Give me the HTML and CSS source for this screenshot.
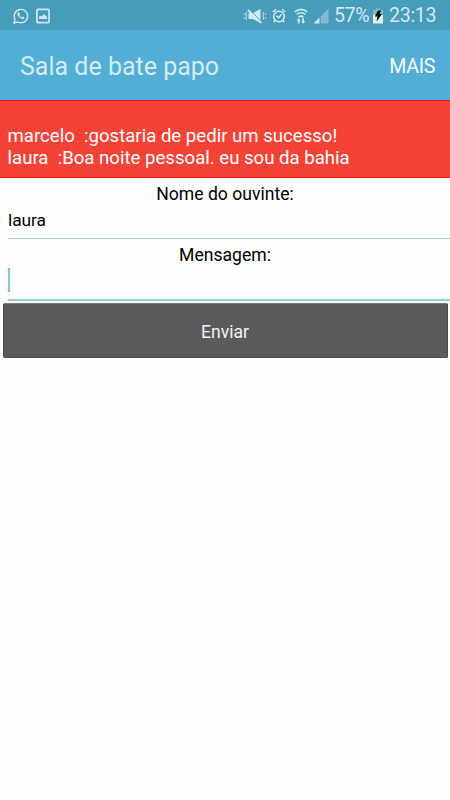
FILE: index.html
```html
<!DOCTYPE html>
<html lang="pt-BR">
<head>
    <meta charset="UTF-8">
    <meta name="viewport" content="width=device-width, initial-scale=1">
    <title>Sala de bate papo</title>
    <link rel="stylesheet" href="styles.css">
</head>
<body>
<div class="status-bar">
    <svg class="icon-whatsapp" width="16" height="16" viewBox="0 0 16 16">
        <path d="M1 15l1-3.8A6.7 6.7 0 1 1 4.8 14z" fill="none" stroke="#d3e9f1" stroke-width="1.4"/>
        <path d="M5.300 4.200c-1.600.7-1 3 .9 4.900s4.200 2.700 5.200 1.200c.4-.8 0-1.100-1.900-1.800l-1 1c-1-.4-1.800-1.200-2.200-2.200l.7-.9c-.4-1.800-.8-2.400-1.700-2.200z" fill="#d3e9f1"/>
    </svg>
    <svg class="icon-picture" width="14" height="16" viewBox="0 0 14 16">
        <rect x=".9" y="1.400" width="12.200" height="13.200" rx=".8" fill="none" stroke="#d3e9f1" stroke-width="1.700"/>
        <path d="M3 11V8.700l1.700-1.200 1.300.8 2.200-2.200 1.300 1.600 1.500.9V11z" fill="#d3e9f1"/>
    </svg>
    <span class="spacer"></span>
    <svg class="icon-mute" width="24" height="16" viewBox="0 0 24 16">
        <path d="M5.500 5.200h4.300L17.500 1v14L9.800 11H5.500z" fill="#d3e9f1"/>
        <path d="M5.500.8l13 12.500" stroke="#479bbb" stroke-width="1"/>
        <path d="M4.800 1.800l13.500 13" stroke="#d3e9f1" stroke-width="1.800"/>
        <path d="M3.700 4l-1 2 1 2-1 2 1 2M1.200 5.500v1.500M1.200 9v1.500M19.800 4l1 2-1 2 1 2-1 2M22.600 5.500v1.500M22.600 9v1.500" fill="none" stroke="#c3e0eb"/>
    </svg>
    <svg class="icon-alarm" width="14" height="16" viewBox="0 0 14 16">
        <circle cx="7" cy="8.500" r="5.300" fill="none" stroke="#d3e9f1" stroke-width="1.500"/>
        <path d="M.8 4L4 1.300M10 1.300L13.200 4M2.900 12.500L1.700 14.300M11.100 12.500l1.200 1.800M4.300 7.700l2.300 2 3-3.400" fill="none" stroke="#d3e9f1" stroke-width="1.500"/>
    </svg>
    <svg class="icon-wifi" width="14" height="16" viewBox="0 0 14 16">
        <path d="M.8 3.800Q7-1 13.200 3.800M2.700 6.400q4.300-3.300 8.600 0M4.600 9q2.400-1.800 4.800 0" fill="none" stroke="#d3e9f1" stroke-width="1.600"/>
        <path d="M4.700 10l2 2.500H5.500v3H3.900v-3H2.700zM8.400 10H10v3h1.200l-2 2.700L7.200 13h1.200z" fill="#d3e9f1"/>
    </svg>
    <svg class="icon-signal" width="16" height="16" viewBox="0 0 16 16">
        <path d="M7.800 8.200L15.500.5v15H7.800z" fill="#83bcd2"/>
        <path d="M.5 15.500L6.500 9.500v6z" fill="#d3e9f1"/>
    </svg>
    <span class="battery-level">57%</span>
    <svg class="icon-battery" width="12" height="16" viewBox="0 0 12 16">
        <path d="M4 .5h4V2h3v5H1V2h3z" fill="#80bad0"/>
        <path d="M1 7h10v8.500H1z" fill="#e4f1f5"/>
        <path d="M6 2.500h3L7.500 6H10l-5.500 7.500 1-5H2.800z" fill="#000"/>
    </svg>
    <span class="clock">23:13</span>
</div>
<header class="app-bar">
    <h1 class="app-title">Sala de bate papo</h1>
    <button class="menu-button" type="button">MAIS</button>
</header>
<div class="messages">
    <p class="message">marcelo  :gostaria de pedir um sucesso!</p>
    <p class="message">laura  :Boa noite pessoal. eu sou da bahia</p>
</div>
<form class="chat-form">
    <label class="name-label" for="nome">Nome do ouvinte:</label>
    <input class="field field-name" type="text" id="nome" value="laura">
    <label class="text-label">Mensagem:</label>
    <div class="field field-message"><span class="cursor"></span></div>
    <button class="send-button" type="button">Enviar</button>
</form>
</body>
</html>
```

FILE: styles.css
```css
* {
    box-sizing: border-box;
}

body {
    margin: 0;
    background: #fefefe;
    color: #000;
    font-family: Roboto, "Liberation Sans", sans-serif;
}

.status-bar {
    display: flex;
    align-items: center;
    height: 30px;
    padding: 1px 14px 0 13px;
    background: #479bbb;
    color: #d3e9f1;
    font-size: 19.6px;
    letter-spacing: -0.4px;
    line-height: 30px;
}

.icon-picture {
    margin-left: 7px;
}

.spacer {
    flex: 1;
}

.icon-alarm {
    margin-left: 5px;
}

.icon-wifi {
    margin-left: 8px;
}

.icon-signal {
    margin-left: 5px;
}

.battery-level {
    width: 35px;
    margin-left: 5px;
}

.icon-battery {
    margin-left: 3px;
}

.clock {
    width: 47px;
    margin-left: 5px;
    letter-spacing: -0.3px;
}

.app-bar {
    display: flex;
    align-items: center;
    justify-content: space-between;
    height: 70px;
    padding: 2px 15px 0 20px;
    background: #52aed4;
}

.app-title {
    margin: 0;
    color: #d4ebf4;
    font-size: 25px;
    font-weight: 400;
}

.menu-button {
    padding: 1px 0 0;
    border: 0;
    background: none;
    color: #f5fafc;
    font-family: inherit;
    font-size: 19.6px;
    letter-spacing: -0.3px;
}

.messages {
    height: 78px;
    padding: 24px 7px 0 7.5px;
    border-top: 1px solid #dc1c0c;
    border-bottom: 1px solid #ee0c04;
    background: #f44336;
    color: #fff;
}

.message {
    margin: 0;
    font-size: 18.6px;
    line-height: 22px;
    white-space: pre;
}

.chat-form {
    display: flex;
    flex-direction: column;
    font-size: 17.6px;
}

.name-label, .text-label {
    height: 31px;
    line-height: 32px;
    text-align: center;
}

.field {
    height: 30px;
    margin-left: 8px;
    padding: 0;
    border: 0;
    border-bottom: 1px solid #9cd5d1;
    border-radius: 0;
    background: none;
    font-family: inherit;
    font-size: 17.4px;
    letter-spacing: -0.1px;
}

.field-name {
    padding-bottom: 8px;
}

.text-label {
    height: 29px;
}

.field-message {
    height: 33px;
    border-bottom: 2px solid #94cfc8;
}

.cursor {
    display: block;
    width: 2px;
    height: 24px;
    background: #80cbc4;
}

.send-button {
    height: 55px;
    margin: 2px 2px 0 3px;
    padding: 2px 1px 0 0;
    border: 1px solid #49494b;
    border-top-color: #77777a;
    border-radius: 2px;
    background: #5a5a5c;
    color: #f4f4f4;
    font-family: inherit;
    font-size: 17.6px;
}
```
